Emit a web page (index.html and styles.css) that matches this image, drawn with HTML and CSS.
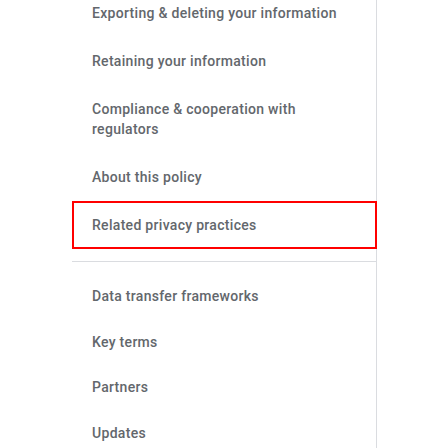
FILE: index.html
```html
<!DOCTYPE html>
<html>
<head>
<meta charset="utf-8">
<link rel="stylesheet" href="styles.css">
</head>
<body>
<nav class="toc">
  <ul class="toc-list">
    <li><a class="toc-link" href="#">Exporting &amp; deleting your information</a></li>
    <li><a class="toc-link" href="#">Retaining your information</a></li>
    <li><a class="toc-link" href="#">Compliance &amp; cooperation with regulators</a></li>
    <li><a class="toc-link" href="#">About this policy</a></li>
    <li><a class="toc-link is-focused" href="#">Related privacy practices</a></li>
  </ul>
  <hr class="toc-divider">
  <ul class="toc-list toc-list--extra">
    <li><a class="toc-link" href="#">Data transfer frameworks</a></li>
    <li><a class="toc-link" href="#">Key terms</a></li>
    <li><a class="toc-link" href="#">Partners</a></li>
    <li><a class="toc-link" href="#">Updates</a></li>
  </ul>
</nav>
</body>
</html>
```
FILE: styles.css
```css
html, body {
  margin: 0;
  padding: 0;
  background: #ffffff;
  height: 100%;
  overflow: hidden;
}

.toc {
  box-sizing: border-box;
  width: 305px;
  margin: -11px 0 0 72px;
  min-height: 480px;
  border-right: 1px solid #dadce0;
  font-family: Roboto, "Liberation Sans", sans-serif;
  font-size: 14px;
  font-weight: 500;
  line-height: 20px;
  letter-spacing: 0.3px;
}

.toc-list {
  list-style: none;
  margin: 0;
  padding: 0;
}

.toc-link {
  display: block;
  padding: 14px 24px 14px 20px;
  color: #63676c;
  text-decoration: none;
}

.toc-list--extra .toc-link {
  padding: 12px 24px 13.5px 20px;
}

.toc-link.is-focused {
  outline: 2px solid #ff0000;
  outline-offset: -2px;
  margin-right: -1px;
}

.toc-divider {
  border: 0;
  border-top: 1px solid #dadce0;
  margin: 12px 0;
  height: 0;
}
```
